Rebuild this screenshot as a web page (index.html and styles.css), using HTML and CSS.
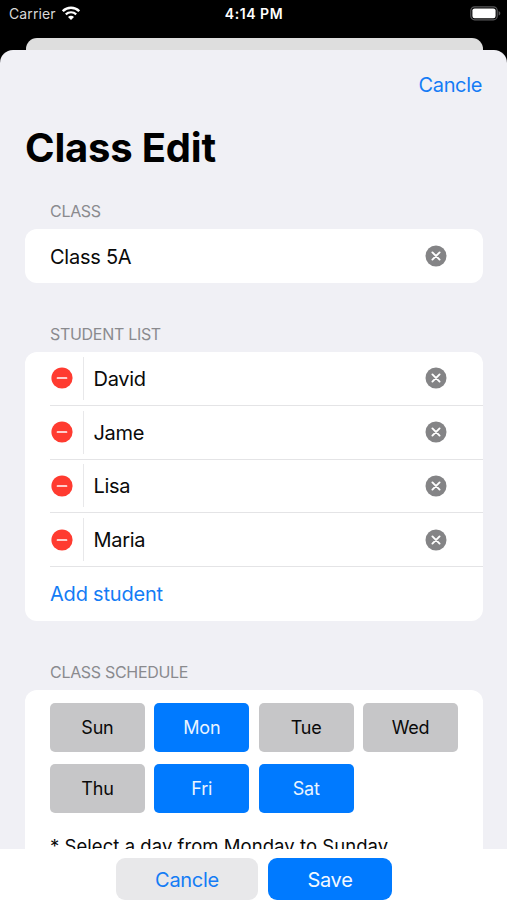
FILE: index.html
```html
<!DOCTYPE html>
<html lang="en">
<head>
  <meta charset="UTF-8">
  <meta name="viewport" content="width=device-width, initial-scale=1.0">
  <title>Class Edit</title>
  <link rel="stylesheet" href="styles.css">
</head>
<body>

<!-- Shared icons -->
<svg class="icon-defs" width="0" height="0">
  <symbol id="icon-clear" viewBox="0 0 22 22">
    <circle cx="11" cy="11" r="10.5" fill="#848486"/>
    <path d="M7.4 7.4l7.2 7.2M14.6 7.4l-7.2 7.2" stroke="#fff" stroke-width="1.9" stroke-linecap="round"/>
  </symbol>
  <symbol id="icon-remove" viewBox="0 0 22 22">
    <circle cx="11" cy="11" r="10.6" fill="#ff3b30"/>
    <path d="M6.5 11h9" stroke="#fff" stroke-width="1.7" stroke-linecap="round"/>
  </symbol>
</svg>

<div class="app">
  <header class="status-bar">
    <div class="status-left">
      <span class="carrier">Carrier</span>
      <svg class="wifi" width="18" height="14" viewBox="0 0 18 14">
        <path d="M.8 5.2a11.6 11.6 0 0 1 16.4 0" fill="none" stroke="#fff" stroke-width="2.4"/>
        <path d="M3.8 8.4a7.4 7.4 0 0 1 10.4 0" fill="none" stroke="#fff" stroke-width="2.2"/>
        <path d="M9 13.9l-3-3a4.2 4.2 0 0 1 6 0z" fill="#fff"/>
      </svg>
    </div>
    <span class="time">4:14 PM</span>
    <div class="status-right">
      <svg width="31" height="15" viewBox="0 0 31 15">
        <rect x=".8" y=".8" width="26.4" height="13" rx="3.8" fill="none" stroke="#58585a" stroke-width="1.2"/>
        <rect x="2.4" y="2.4" width="23.2" height="9.8" rx="2.2" fill="#fff"/>
        <path d="M28.6 5v4.6c1-.4 1.7-1.3 1.7-2.3s-.7-1.9-1.7-2.3z" fill="#58585a"/>
      </svg>
    </div>
  </header>

  <div class="back-sheet"></div>

  <main class="sheet">
    <div class="nav"><a class="nav-cancel">Cancle</a></div>
    <h1>Class Edit</h1>

    <section>
      <h2>Class</h2>
      <div class="card">
        <div class="row">
          <span class="value value-class">Class 5A</span>
          <svg class="clear"><use href="#icon-clear"/></svg>
        </div>
      </div>
    </section>

    <section>
      <h2>Student List</h2>
      <div class="card">
        <div class="row student">
          <svg class="remove"><use href="#icon-remove"/></svg>
          <span class="divider"></span>
          <span class="value">David</span>
          <svg class="clear"><use href="#icon-clear"/></svg>
        </div>
        <div class="row student">
          <svg class="remove"><use href="#icon-remove"/></svg>
          <span class="divider"></span>
          <span class="value">Jame</span>
          <svg class="clear"><use href="#icon-clear"/></svg>
        </div>
        <div class="row student">
          <svg class="remove"><use href="#icon-remove"/></svg>
          <span class="divider"></span>
          <span class="value">Lisa</span>
          <svg class="clear"><use href="#icon-clear"/></svg>
        </div>
        <div class="row student">
          <svg class="remove"><use href="#icon-remove"/></svg>
          <span class="divider"></span>
          <span class="value">Maria</span>
          <svg class="clear"><use href="#icon-clear"/></svg>
        </div>
        <div class="row"><a class="add">Add student</a></div>
      </div>
    </section>

    <section>
      <h2>Class Schedule</h2>
      <div class="card schedule">
        <div class="days">
          <button class="day">Sun</button>
          <button class="day selected">Mon</button>
          <button class="day">Tue</button>
          <button class="day">Wed</button>
          <button class="day">Thu</button>
          <button class="day selected">Fri</button>
          <button class="day selected">Sat</button>
        </div>
        <p class="hint">* Select a day from Monday to Sunday</p>
      </div>
    </section>
  </main>

  <footer class="actions">
    <button class="btn btn-cancel">Cancle</button>
    <button class="btn btn-save">Save</button>
  </footer>
</div>

</body>
</html>
```
FILE: styles.css
```css
* {
  box-sizing: border-box;
}
body {
  margin: 0;
  background: #000;
  color: #0a0a0a;
  font-family: Inter, Roboto, sans-serif;
  font-size: 20px;
}
button {
  border: none;
  padding: 0;
  font-family: inherit;
  cursor: pointer;
}
.icon-defs {
  display: block;
}
.app {
  display: flex;
  flex-direction: column;
  height: 100vh;
  overflow: hidden;
}

/* Status bar */
.status-bar {
  flex: none;
  display: grid;
  grid-template-columns: 1fr auto 1fr;
  align-items: center;
  height: 38px;
  padding: 0 6px 11px 9px;
  color: #fff;
  font-size: 14px;
}
.status-left {
  display: flex;
  align-items: center;
  gap: 6px;
}
.carrier {
  color: #d8d8d8;
  letter-spacing: 0.1px;
}
.wifi {
  margin-top: -2px;
}
.time {
  font-size: 14px;
  font-weight: 600;
  letter-spacing: 0.55px;
  margin-right: 2px;
}
.status-right {
  display: flex;
  justify-content: flex-end;
}

/* Sheets */
.back-sheet {
  flex: none;
  height: 12px;
  margin: 0 24.5px 0 25.5px;
  background: #dedede;
  border-radius: 11px 11px 0 0;
}
.sheet {
  flex: 1;
  min-height: 0;
  overflow: hidden;
  padding: 0 24.5px 0 25px;
  background: #f0f0f5;
  border-radius: 13px 13px 0 0;
}
.nav {
  display: flex;
  justify-content: flex-end;
  height: 70px;
  line-height: 70px;
}
.nav-cancel,
.add {
  color: #147cf5;
}
.nav-cancel {
  margin-right: 0.5px;
  letter-spacing: -0.35px;
}
h1 {
  margin: 0;
  height: 56px;
  line-height: 56px;
  font-size: 40px;
  font-weight: 700;
  letter-spacing: -0.2px;
  color: #000;
}
h2 {
  margin: 0;
  padding: 0 25px;
  height: 35px;
  line-height: 35px;
  font-size: 16px;
  font-weight: 400;
  letter-spacing: -0.3px;
  text-transform: uppercase;
  color: #8a8a8e;
}
section {
  padding-top: 34px;
}
h1 + section {
  padding-top: 18.25px;
}

/* Cards */
.card {
  background: #fff;
  border-radius: 12px;
}
.row {
  display: flex;
  align-items: center;
  height: 53.75px;
  margin-left: 25px;
  padding-right: 36px;
}
.student {
  border-bottom: 1px solid #e4e4e6;
}
.value {
  flex: 1;
  padding-top: 1px;
  letter-spacing: -0.3px;
}
.value-class {
  letter-spacing: -0.25px;
}
.add {
  letter-spacing: -0.2px;
}
.clear,
.remove {
  width: 22px;
  height: 22px;
}
.remove {
  margin-left: 0.5px;
}
.divider {
  width: 1px;
  height: 43px;
  margin: 0 9.5px 0 10.5px;
  background: #e8e8ea;
}

/* Schedule */
.schedule {
  height: 260px;
  padding: 13px 24.5px 0 25px;
}
.days {
  display: grid;
  grid-template-columns: repeat(4, 1fr);
  gap: 12px 9.5px;
}
.day {
  height: 49px;
  border-radius: 5px;
  background: #c6c6c8;
  color: #0a0a0a;
  font-size: 18px;
  letter-spacing: -0.2px;
}
.day.selected {
  background: #007aff;
  color: #e9f4ff;
}
.hint {
  margin: 20.5px 0 0;
  line-height: 26px;
  font-size: 18.5px;
  letter-spacing: 0.05px;
  white-space: nowrap;
}

/* Bottom actions */
.actions {
  flex: none;
  display: flex;
  justify-content: center;
  gap: 10px;
  height: 51px;
  padding: 9px 0 0 1px;
  background: #fff;
}
.btn {
  height: 42px;
  padding-top: 1px;
  border-radius: 9px;
  font-size: 20px;
  letter-spacing: -0.3px;
}
.btn-cancel {
  width: 142px;
  background: #e8e8ea;
  color: #147cf5;
}
.btn-save {
  width: 124px;
  background: #007aff;
  color: #f2f8ff;
}
```
